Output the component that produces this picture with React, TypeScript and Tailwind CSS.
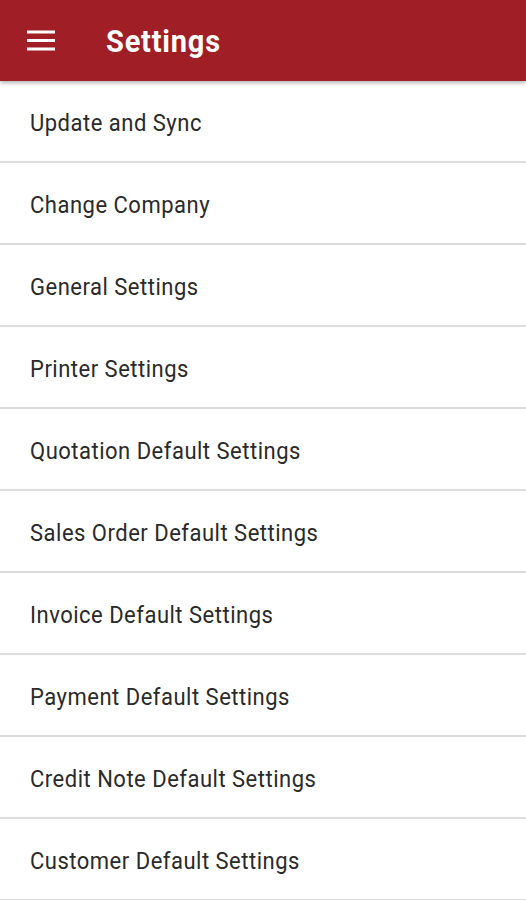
import React from "react";

const items = [
  "Update and Sync",
  "Change Company",
  "General Settings",
  "Printer Settings",
  "Quotation Default Settings",
  "Sales Order Default Settings",
  "Invoice Default Settings",
  "Payment Default Settings",
  "Credit Note Default Settings",
  "Customer Default Settings",
];

export default function App() {
  return (
    <div className="w-[526px] h-[900px] overflow-hidden bg-white" style={{ fontFamily: "Roboto, 'Noto Sans', sans-serif" }}>
      <div className="relative z-10 h-[81px] bg-[#a01e25] flex items-center shadow-[0_2px_4px_rgba(0,0,0,0.3)]">
        <div className="w-[106px] pl-[27px] flex items-center">
          <svg width="28" height="21" viewBox="0 0 28 21">
            <rect x="0" y="0.5" width="28" height="3" fill="white" />
            <rect x="0" y="9" width="28" height="3" fill="white" />
            <rect x="0" y="17.5" width="28" height="3" fill="white" />
          </svg>
        </div>
        <span className="inline-block text-white text-[29px] font-bold tracking-[0.8px] scale-y-[1.1] origin-left translate-y-[1px]">Settings</span>
      </div>
      <div className="flex flex-col">
        {items.map((t) => (
          <div key={t} className="h-[82px] shrink-0 flex items-center pl-[30px] border-b-2 border-[#dddddd]">
            <span className="inline-block text-[22px] tracking-[0.5px] text-[#2a2a2a] scale-y-[1.1] origin-left translate-y-[1px]">{t}</span>
          </div>
        ))}
      </div>
    </div>
  );
}
